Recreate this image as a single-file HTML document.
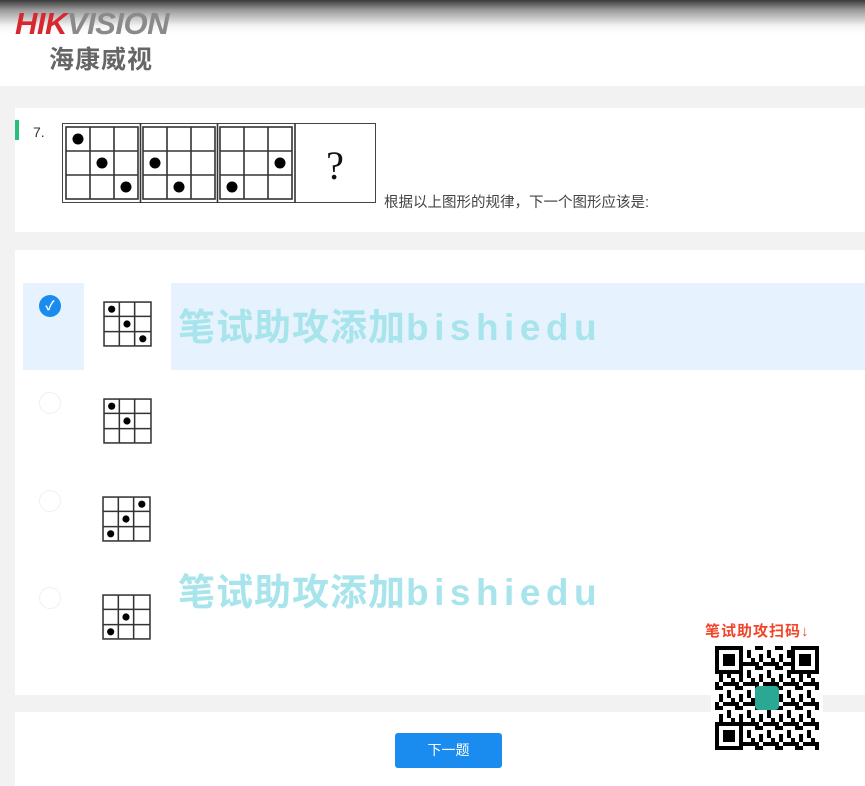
<!DOCTYPE html>
<html><head><meta charset="utf-8"><style>
*{margin:0;padding:0;box-sizing:border-box}
body{width:865px;height:786px;background:#f2f2f2;position:relative;overflow:hidden;font-family:"Liberation Sans","Noto Sans CJK SC",sans-serif}
.hdr{position:absolute;left:0;top:0;width:865px;height:86px;background:linear-gradient(#3a3a3a 0px,#9a9a9a 10px,#f4f4f4 26px,#fff 34px)}
.card{position:absolute;left:15px;width:850px;background:#fff}
.wm{position:absolute;left:178px;font-size:37px;font-weight:bold;color:#a8e4ec;letter-spacing:1px;white-space:nowrap}
.wm b{letter-spacing:5.5px}
</style></head><body>
<div class="hdr">
<div style="position:absolute;left:15px;top:6px;font-size:31px;font-weight:bold;font-style:italic;letter-spacing:-0.5px"><span style="color:#d7272f">HIK</span><span style="color:#8a8a8a">VISION</span></div>
<div style="position:absolute;left:49px;top:40px;font-size:25px;font-weight:bold;color:#666;letter-spacing:1px">海康威视</div>
</div>
<div class="card" style="top:108px;height:124px">
<div style="position:absolute;left:0;top:12px;width:4px;height:20px;background:#27c07a"></div>
<div style="position:absolute;left:18px;top:16px;font-size:14px;color:#333">7.</div>
<svg style="position:absolute;left:47px;top:15px" width="314" height="80" viewBox="0 0 314 80">
<rect x="0.5" y="0.5" width="313" height="79" fill="#fff" stroke="#444"/>
<g stroke="#333" fill="none" stroke-width="1.6">
<rect x="4" y="4" width="72" height="72"/><path d="M28 4V76M52 4V76M4 28H76M4 52H76"/>
<rect x="81" y="4" width="72" height="72"/><path d="M105 4V76M129 4V76M81 28H153M81 52H153"/>
<rect x="158" y="4" width="72" height="72"/><path d="M182 4V76M206 4V76M158 28H230M158 52H230"/>
<path d="M78.5 0V80M155.5 0V80M233 0V80"/>
</g>
<g fill="#000">
<circle cx="16" cy="16" r="5.5"/><circle cx="40" cy="40" r="5.5"/><circle cx="64" cy="64" r="5.5"/>
<circle cx="93" cy="40" r="5.5"/><circle cx="117" cy="64" r="5.5"/>
<circle cx="218" cy="40" r="5.5"/><circle cx="170" cy="64" r="5.5"/>
</g>
<text x="273" y="56" font-size="40" text-anchor="middle" font-family="Liberation Serif" fill="#111">?</text>
</svg>
<div style="position:absolute;left:369px;top:83px;font-size:14.5px;color:#444;white-space:nowrap">根据以上图形的规律，下一个图形应该是:</div>
</div>
<div class="card" style="top:250px;height:445px">
<div style="position:absolute;left:8px;top:33px;width:61px;height:87px;background:#e6f2fd"></div>
<div style="position:absolute;left:156px;top:33px;width:694px;height:87px;background:#e6f2fd"></div>
<div style="position:absolute;left:24px;top:45px;width:22px;height:22px;border-radius:50%;background:#1a8cf0;color:#fff;font-size:13px;text-align:center;line-height:22px;font-weight:bold">✓</div>
<div style="position:absolute;left:24px;top:142px;width:22px;height:22px;border-radius:50%;border:1px solid #f0f0f0"></div>
<div style="position:absolute;left:24px;top:240px;width:22px;height:22px;border-radius:50%;border:1px solid #f0f0f0"></div>
<div style="position:absolute;left:24px;top:337px;width:22px;height:22px;border-radius:50%;border:1px solid #f0f0f0"></div>
</div>
<svg style="position:absolute;left:103px;top:301px" width="49" height="46" viewBox="0 0 48 45"><g stroke="#333" fill="none" stroke-width="1.5"><rect x="1" y="1" width="46" height="43"/><path d="M16 1V44M31 1V44M1 15H47M1 30H47"/></g><g><circle cx="8.5" cy="8" r="3.5"/><circle cx="23.5" cy="22.5" r="3.5"/><circle cx="39" cy="37" r="3.5"/></g></svg>
<svg style="position:absolute;left:103px;top:398px" width="49" height="46" viewBox="0 0 48 45"><g stroke="#333" fill="none" stroke-width="1.5"><rect x="1" y="1" width="46" height="43"/><path d="M16 1V44M31 1V44M1 15H47M1 30H47"/></g><g><circle cx="8.5" cy="8" r="3.5"/><circle cx="23.5" cy="22.5" r="3.5"/></g></svg>
<svg style="position:absolute;left:102px;top:496px" width="49" height="46" viewBox="0 0 48 45"><g stroke="#333" fill="none" stroke-width="1.5"><rect x="1" y="1" width="46" height="43"/><path d="M16 1V44M31 1V44M1 15H47M1 30H47"/></g><g><circle cx="39" cy="8" r="3.5"/><circle cx="23.5" cy="22.5" r="3.5"/><circle cx="8.5" cy="37" r="3.5"/></g></svg>
<svg style="position:absolute;left:102px;top:594px" width="49" height="46" viewBox="0 0 48 45"><g stroke="#333" fill="none" stroke-width="1.5"><rect x="1" y="1" width="46" height="43"/><path d="M16 1V44M31 1V44M1 15H47M1 30H47"/></g><g><circle cx="23.5" cy="22.5" r="3.5"/><circle cx="8.5" cy="37" r="3.5"/></g></svg>
<div class="wm" style="top:297px">笔试助攻添加<b>bishiedu</b></div>
<div class="wm" style="top:562px">笔试助攻添加<b>bishiedu</b></div>
<div class="card" style="top:712px;height:74px">
<div style="position:absolute;left:380px;top:21px;width:107px;height:35px;background:#1a8cf0;border-radius:3px;color:#fff;font-size:14px;text-align:center;line-height:35px">下一题</div>
</div>
<div style="position:absolute;left:705px;top:620px;font-size:15px;font-weight:bold;color:#f0452a;letter-spacing:1px">笔试助攻扫码↓</div>
<div style="position:absolute;left:711px;top:643px;width:112px;height:108px;background:#fff"></div>
<svg style="position:absolute;left:715px;top:646px" width="104" height="104" viewBox="0 0 26 26">
<defs><pattern id="p" width="5" height="5" patternUnits="userSpaceOnUse"><rect x="0" y="0" width="2" height="1"/><rect x="3" y="1" width="1" height="2"/><rect x="1" y="2" width="1" height="2"/><rect x="2" y="4" width="3" height="1"/><rect x="4" y="3" width="1" height="1"/><rect x="0" y="4" width="1" height="1"/></pattern></defs>
<rect width="26" height="26" fill="url(#p)"/>
<g><rect x="0" y="0" width="7" height="7" fill="#fff"/><rect x="19" y="0" width="7" height="7" fill="#fff"/><rect x="0" y="19" width="7" height="7" fill="#fff"/></g>
<g fill="none" stroke="#000"><rect x="0.5" y="0.5" width="6" height="6"/><rect x="19.5" y="0.5" width="6" height="6"/><rect x="0.5" y="19.5" width="6" height="6"/></g>
<rect x="2" y="2" width="3" height="3"/><rect x="21" y="2" width="3" height="3"/><rect x="2" y="21" width="3" height="3"/>
<rect x="10" y="10" width="6" height="6" rx="1" fill="#2aa893"/>
</svg>
</body></html>
